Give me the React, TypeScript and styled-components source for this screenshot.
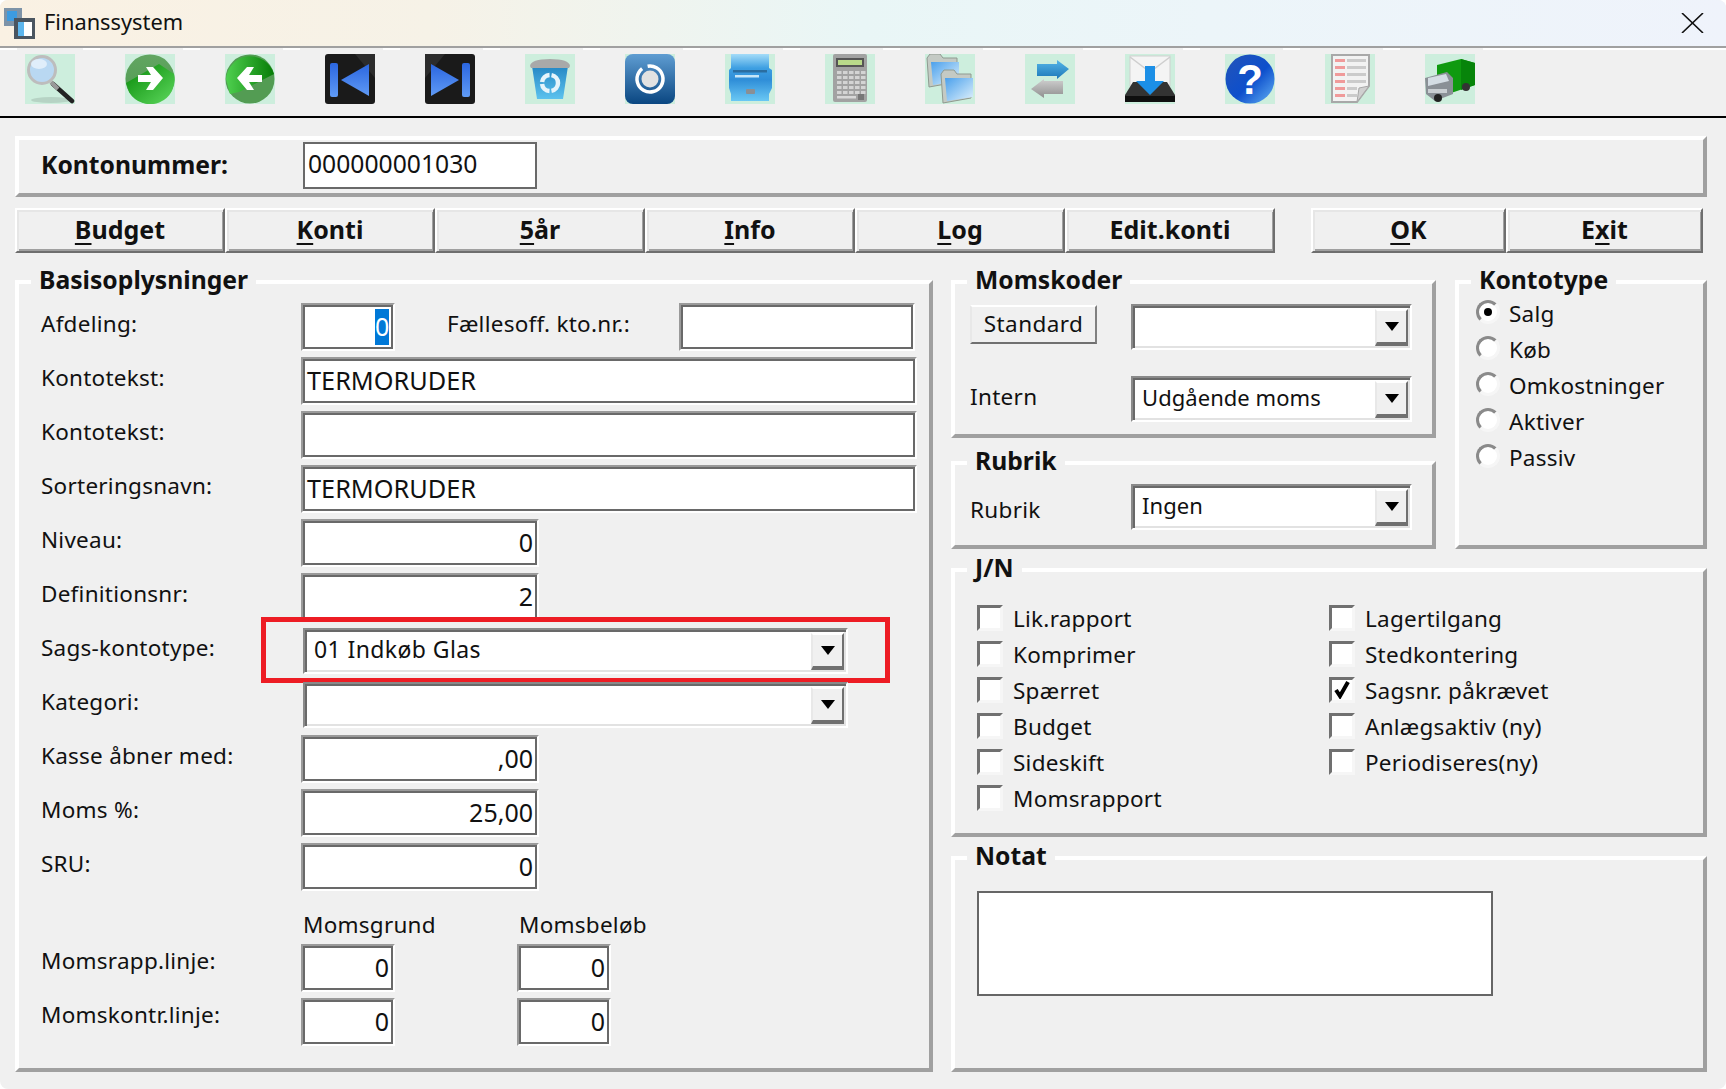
import React from 'react'
import styled, { createGlobalStyle } from 'styled-components'

const GlobalStyle = createGlobalStyle`
    html, body {
        margin: 0;
        padding: 0;
        background: #fff;
    }
    body {
        font-family: "Noto Sans", sans-serif;
        color: #111;
    }
`

const Window = styled.div`
    width: 1726px;
    height: 1089px;
    box-sizing: border-box;
    background: #f0f0f0;
    border-radius: 8px;
    overflow: hidden;
    display: flex;
    flex-direction: column;
`

const TitleBar = styled.div`
    height: 46px;
    box-sizing: content-box;
    flex-shrink: 0;
    display: flex;
    align-items: center;
    padding: 0 22px 0 3px;
    border-bottom: 2px solid #a0a0a0;
    background: linear-gradient(90deg, #faf1e3 0%, #f6f2e7 25%, #e9f6f6 50%, #ecf5f9 70%, #eff3fb 100%);
`

const TitleText = styled.span`
    font-size: 21.8px;
    margin-left: 8px;
    padding-bottom: 4px;
    flex: 1;
`

const DashLine = styled.div`
    height: 2px;
    flex-shrink: 0;
    background:
        linear-gradient(90deg, transparent 1483px, #fff 1483px),
        linear-gradient(90deg, #fff 17px, transparent 17px) no-repeat,
        repeating-linear-gradient(90deg, transparent 0 83px, #fff 83px 117px, transparent 117px 100px);
    background-size: auto, auto, 100px 2px;
`

const Toolbar = styled.div`
    height: 62px;
    flex-shrink: 0;
    display: flex;
    gap: 50px;
    padding: 4px 0 0 25px;
    border-bottom: 2px solid #000;
`

const ToolIcon = styled.svg`
    width: 50px;
    height: 50px;
    flex-shrink: 0;
`

const Content = styled.div`
    flex: 1;
    display: flex;
    flex-direction: column;
    padding: 18px 19px 17px 15px;
`

const GroupBox = styled.div<{ $h?: number }>`
    position: relative;
    box-sizing: border-box;
    border-style: solid;
    border-width: 4px;
    border-color: #fff #a0a0a0 #a0a0a0 #fff;
    ${p => p.$h ? `height: ${p.$h}px; flex-shrink: 0;` : 'flex: 1;'}
`

const Legend = styled.div`
    position: absolute;
    top: -21px;
    left: 12px;
    padding: 0 8px;
    background: #f0f0f0;
    font-size: 24.7px;
    font-weight: 700;
    line-height: 34px;
`

const AccountBar = styled(GroupBox)`
    display: flex;
    align-items: center;
    padding-left: 23px;
    padding-bottom: 3px;
`

const AccountLabel = styled.div`
    width: 262px;
    margin-left: -1px;
    padding-bottom: 2px;
    font-size: 24.7px;
    font-weight: 700;
`

const Field = styled.div<{ $w: number; $h?: number; $right?: boolean; $flat?: boolean }>`
    width: ${p => p.$w}px;
    height: ${p => p.$h ?? 48}px;
    box-sizing: border-box;
    flex-shrink: 0;
    display: flex;
    align-items: center;
    justify-content: ${p => p.$right ? 'flex-end' : 'flex-start'};
    padding: ${p => p.$right ? '0 4px 3px 0' : `0 0 3px ${p.$flat ? 3 : 4}px`};
    background: #fff;
    font-size: ${p => p.$right ? 25 : p.$flat ? 24.7 : 25.3}px;
    white-space: nowrap;
    overflow: hidden;
    border-style: solid;
    border-width: 2px;
    border-color: ${p => p.$flat ? '#696969' : '#9a9a9a #fff #fff #9a9a9a'};
    ${p => p.$flat ? '' : 'box-shadow: inset 0 0 0 2px #696969;'}
`

const Selection = styled.span`
    display: block;
    width: 14px;
    height: 36px;
    margin: 3px 0 0 0;
    background: #0078d7;
    color: #fff;
    line-height: 34px;
    text-align: center;
`

const ButtonRow = styled.div`
    display: flex;
    justify-content: space-between;
    margin: 11px 4px 0 0;
    flex-shrink: 0;
`

const ButtonGroup = styled.div`
    display: flex;
`

const CmdButton = styled.div<{ $w: number }>`
    width: ${p => p.$w}px;
    height: 45px;
    box-sizing: border-box;
    display: flex;
    align-items: center;
    justify-content: center;
    padding-bottom: 3px;
    font-size: 25px;
    font-weight: 700;
    background: #f0f0f0;
    border-style: solid;
    border-width: 2px;
    border-color: #fff #6e6e6e #6e6e6e #fff;
    box-shadow: inset 2px 2px 0 #e6e6e6, inset -1px -2px 0 #a0a0a0;

    u {
        text-underline-offset: 4px;
        text-decoration-thickness: 2px;
    }
`

const Main = styled.div`
    flex: 1;
    display: flex;
    gap: 18px;
    margin-top: 27px;
    min-height: 0;
`

const LeftPanel = styled(GroupBox)`
    flex: none;
    width: 918px;
    padding: 16px 0 0 22px;
`

const FormRow = styled.div`
    position: relative;
    height: 54px;
    display: flex;
    align-items: center;
`

const FormLabel = styled.div<{ $w?: number; $gap?: number; $lift?: number }>`
    width: ${p => p.$w ?? 260}px;
    margin-left: ${p => p.$gap ?? 0}px;
    padding-bottom: ${p => p.$lift ?? 8}px;
    font-size: 22.5px;
    letter-spacing: 0.25px;
    white-space: nowrap;
    flex-shrink: 0;
`

const ColumnHeads = styled.div`
    height: 47px;
    display: flex;
    align-items: flex-end;
    padding-left: 260px;
    font-size: 22.5px;
    letter-spacing: 0.25px;
`

const ColumnHead = styled.div`
    width: 216px;
    padding: 0 0 0 2px;
    box-sizing: border-box;
    line-height: 32px;
`

const Spacer = styled.div`
    width: 122px;
    flex-shrink: 0;
`

const Highlight = styled.div`
    position: absolute;
    left: 220px;
    top: -7px;
    width: 629px;
    height: 66px;
    box-sizing: border-box;
    border: 5px solid #ed1c24;
`

const SelectBox = styled.div<{ $w: number; $shift: number }>`
    width: ${p => p.$w}px;
    height: 46px;
    margin-left: ${p => p.$shift}px;
    box-sizing: border-box;
    flex-shrink: 0;
    display: flex;
    align-items: stretch;
    background: #fff;
    border-style: solid;
    border-width: 2px;
    border-color: #8a8a8a #fff #fff #8a8a8a;
    box-shadow: inset 2px 2px 0 #696969, inset -2px -2px 0 #e2e2e2;
`

const SelectValue = styled.div<{ $tight?: boolean }>`
    flex: 1;
    display: flex;
    align-items: center;
    padding: 0 0 5px 9px;
    font-size: ${p => p.$tight ? 22 : 23}px;
    letter-spacing: ${p => p.$tight ? 0.05 : 0.4}px;
    white-space: nowrap;
`

const SelectArrow = styled.div`
    width: 33px;
    margin: 3px 2px 2px 0;
    box-sizing: border-box;
    display: flex;
    align-items: center;
    justify-content: center;
    background: #f0f0f0;
    border-style: solid;
    border-width: 2px 2px 4px 2px;
    border-color: #fff #707070 #707070 #e8e8e8;

    &::after {
        content: '';
        width: 0;
        height: 0;
        border-style: solid;
        border-width: 9px 7px 0 7px;
        border-color: #000 transparent transparent transparent;
    }
`

const RightPanel = styled.div`
    flex: 1;
    min-width: 0;
    display: flex;
    flex-direction: column;
    gap: 19px;
`

const TopRight = styled.div`
    display: flex;
    gap: 19px;
    height: 269px;
    flex-shrink: 0;
`

const CodesColumn = styled.div`
    width: 485px;
    display: flex;
    flex-direction: column;
    gap: 23px;
`

const CodeRow = styled.div<{ $top: number }>`
    display: flex;
    align-items: center;
    padding: ${p => p.$top}px 0 0 15px;
`

const CodeLabel = styled.div<{ $nudge: number }>`
    width: 161px;
    font-size: 22.5px;
    letter-spacing: 0.3px;
    flex-shrink: 0;
    padding: ${p => p.$nudge > 0 ? `${p.$nudge}px 0 0` : `0 0 ${-p.$nudge}px`};
`

const PlainButton = styled.div`
    width: 127px;
    height: 39px;
    margin-right: 34px;
    margin-bottom: 6px;
    padding-bottom: 2px;
    box-sizing: border-box;
    flex-shrink: 0;
    display: flex;
    align-items: center;
    justify-content: center;
    font-size: 22.5px;
    letter-spacing: 0.4px;
    background: #f0f0f0;
    border-style: solid;
    border-width: 2px;
    border-color: #fff #808080 #707070 #e8e8e8;
`

const RadioList = styled.div`
    flex: 1;
    position: relative;
    padding: 11px 0 0 17px;
`

const OptionRow = styled.div<{ $gap: number }>`
    height: 36px;
    display: flex;
    align-items: center;
    gap: ${p => p.$gap}px;
    font-size: 22.5px;
    letter-spacing: 0.25px;
    white-space: nowrap;
`

const RadioMark = styled.div<{ $on?: boolean }>`
    width: 24px;
    height: 24px;
    box-sizing: border-box;
    margin-bottom: 2px;
    flex-shrink: 0;
    border-radius: 50%;
    background: #fff;
    border-style: solid;
    border-width: 3px;
    border-color: #8a8a8a #f6f6f6 #f6f6f6 #8a8a8a;
    display: flex;
    align-items: center;
    justify-content: center;

    &::after {
        content: '';
        width: 8px;
        height: 8px;
        border-radius: 50%;
        background: ${p => p.$on ? '#000' : 'transparent'};
    }
`

const CheckMark = styled.div`
    width: 26px;
    height: 26px;
    box-sizing: border-box;
    margin-bottom: 2px;
    flex-shrink: 0;
    background: #fff;
    border-style: solid;
    border-width: 3px;
    border-color: #707070 #f6f6f6 #f6f6f6 #707070;
    display: flex;
    align-items: center;
    justify-content: center;
`

const CheckText = styled.span`
    padding-bottom: 2px;
`

const CheckGrid = styled.div`
    display: grid;
    grid-template-columns: 352px 1fr;
    grid-template-rows: repeat(6, 36px);
    grid-auto-flow: column;
    padding: 29px 0 0 22px;
`

const NoteArea = styled.div`
    width: 516px;
    height: 105px;
    margin: 31px 0 0 22px;
    box-sizing: border-box;
    background: #fff;
    border: 2px solid #666;
`

const ToolTile = ({ children }: { children: React.ReactNode }) => (
    <ToolIcon viewBox="0 0 50 50">
        <rect width="50" height="50" fill="#cdeedd" />
        {children}
    </ToolIcon>
)

const AppLogo = () => (
    <svg width="33" height="33" viewBox="0 0 33 33">
        <rect x="1" y="1" width="18" height="18" fill="#7d93a8" />
        <rect x="4" y="4" width="10" height="10" fill="#3d9be0" />
        <rect x="11" y="11" width="21" height="21" fill="#4a5560" />
        <rect x="15" y="15" width="14" height="14" fill="#fff" />
        <rect x="15" y="15" width="6" height="14" fill="#5cb6ee" />
    </svg>
)

const SearchIcon = () => (
    <ToolTile>
        <ellipse cx="26" cy="46" rx="20" ry="3" fill="#b6d3c4" />
        <line x1="28" y1="30" x2="47" y2="47" stroke="#222" strokeWidth="4.5" strokeLinecap="round" />
        <line x1="26" y1="28" x2="33" y2="35" stroke="#999" strokeWidth="4" />
        <circle cx="17" cy="16" r="13.5" fill="#b9d8f2" stroke="#bdbdbd" strokeWidth="3" />
        <ellipse cx="14" cy="10" rx="8" ry="5" fill="#e0eefa" />
    </ToolTile>
)

const RightArrowIcon = () => (
    <ToolTile>
        <defs>
            <linearGradient id="ga" x1="0" y1="0" x2="0" y2="1">
                <stop offset="0" stopColor="#62a562" />
                <stop offset="1" stopColor="#4f9a4f" />
            </linearGradient>
            <linearGradient id="gb" x1="0" y1="0" x2="1" y2="1">
                <stop offset="0" stopColor="#058805" />
                <stop offset="1" stopColor="#5fd95f" />
            </linearGradient>
        </defs>
        <circle cx="25" cy="25" r="24.5" fill="url(#ga)" />
        <path d="M1 29 L 34 10 L 49 20 A 24.5 24.5 0 0 1 4 38 Z" fill="url(#gb)" />
        <path d="M13 21 H26 L21 13 H28 L38 24 L28 36 H21 L26 28 H13 Z" fill="#fff" />
    </ToolTile>
)

const LeftArrowIcon = () => (
    <ToolTile>
        <defs>
            <linearGradient id="gc" x1="0" y1="0" x2="1" y2="0">
                <stop offset="0" stopColor="#4fd04f" />
                <stop offset="1" stopColor="#067c06" />
            </linearGradient>
        </defs>
        <circle cx="25" cy="25" r="24.5" fill="#539c53" />
        <path d="M1 25 A 24.5 24.5 0 0 1 49 20 L 14 38 L 5 40 Z" fill="url(#gc)" />
        <path d="M37 21 H24 L29 13 H22 L12 24 L22 36 H29 L24 28 H37 Z" fill="#fff" />
    </ToolTile>
)

const NavIcon = ({ flip, id }: { flip?: boolean; id: string }) => (
    <ToolIcon viewBox="0 0 50 50">
        <defs>
            <linearGradient id={id} x1="0" y1="0" x2="0" y2="1">
                <stop offset="0" stopColor="#2b66e0" />
                <stop offset="1" stopColor="#5f9af5" />
            </linearGradient>
        </defs>
        <g transform={flip ? 'translate(50 0) scale(-1 1)' : undefined}>
            <rect width="50" height="50" rx="3" fill="#1a1a1a" />
            <path d="M30 0 H50 V24 Z" fill="#2c2c2c" />
            <rect x="5" y="9" width="8" height="34" rx="2" fill={`url(#${id})`} />
            <path d="M44 10 V42 L16 26 Z" fill={`url(#${id})`} />
        </g>
    </ToolIcon>
)

const BinIcon = () => (
    <ToolTile>
        <defs>
            <linearGradient id="gd" x1="0" y1="0" x2="0" y2="1">
                <stop offset="0" stopColor="#2487c4" />
                <stop offset="1" stopColor="#5cc2ee" />
            </linearGradient>
        </defs>
        <path d="M7 12 H43 L38 45 H12 Z" fill="url(#gd)" />
        <path d="M5 12 Q6 5 25 5 Q44 5 45 12 L44 14 H6 Z" fill="#a9a9a9" />
        <circle cx="25" cy="29" r="8" fill="none" stroke="#e6f4fb" strokeWidth="4.5" strokeDasharray="11 2" />
    </ToolTile>
)

const DiscIcon = () => (
    <ToolIcon viewBox="0 0 50 50">
        <defs>
            <linearGradient id="ge" x1="0" y1="0" x2="0" y2="1">
                <stop offset="0" stopColor="#5f9dd2" />
                <stop offset="1" stopColor="#0a4681" />
            </linearGradient>
        </defs>
        <rect width="50" height="50" fill="#cdeedd" />
        <rect width="50" height="50" rx="8" fill="url(#ge)" />
        <circle cx="25" cy="25" r="13" fill="none" stroke="#fff" strokeWidth="3.5" strokeDasharray="66 6" transform="rotate(-60 25 25)" />
        <circle cx="25" cy="25" r="8.5" fill="#e2e2e2" />
    </ToolIcon>
)

const DrawerIcon = () => (
    <ToolTile>
        <defs>
            <linearGradient id="gf" x1="0" y1="0" x2="0" y2="1">
                <stop offset="0" stopColor="#a4dcf8" />
                <stop offset="0.3" stopColor="#3d9fe2" />
                <stop offset="0.55" stopColor="#2f8ed8" />
                <stop offset="1" stopColor="#6ac8f4" />
            </linearGradient>
        </defs>
        <path d="M6 0 H44 V14 L47 16 V34 L44 40 V47 H6 V40 L4 34 V16 L6 14 Z" fill="url(#gf)" />
        <rect x="8" y="16" width="34" height="2.5" fill="#2a6da0" />
        <rect x="10" y="21" width="24" height="2.5" fill="#c6e6f8" />
        <rect x="21" y="35" width="9" height="5" rx="1" fill="#8a8f94" />
    </ToolTile>
)

const keyRows = [17, 22, 27, 32, 37]
const keyCols = [12, 18, 24, 30, 36]

const CalculatorIcon = () => (
    <ToolTile>
        <rect x="8" y="0" width="34" height="48" rx="2" fill="#a2a2a2" />
        <rect x="11" y="4" width="28" height="9" fill="#555" />
        <rect x="13" y="6" width="24" height="5" fill="#b9d98a" />
        {keyRows.map(y => keyCols.map(x => (
            <rect key={`${x}-${y}`} x={x} y={y} width="4.5" height="3" fill="#d4d4d4" />
        )))}
        <rect x="12" y="42" width="19" height="2.5" fill="#d8d8d8" />
        <rect x="33" y="40" width="6" height="6" fill="#777" />
    </ToolTile>
)

const FolderIcon = ({ x, y, id }: { x: number; y: number; id: string }) => (
    <g transform={`translate(${x} ${y})`}>
        <defs>
            <linearGradient id={id} x1="0" y1="0" x2="1" y2="1">
                <stop offset="0" stopColor="#4aa0ec" />
                <stop offset="1" stopColor="#dff1fc" />
            </linearGradient>
        </defs>
        <path d="M1 4 L4 0 H14 L17 4 H31 V28 L3 33 Z" fill="#c4cac4" stroke="#8f9a90" strokeWidth="1" />
        <path d="M5 8 H33 V27 L7 31 Z" fill={`url(#${id})`} />
    </g>
)

const FoldersIcon = () => (
    <ToolTile>
        <FolderIcon x={1} y={0} id="gg" />
        <FolderIcon x={15} y={16} id="gh" />
    </ToolTile>
)

const SwapIcon = () => (
    <ToolTile>
        <defs>
            <linearGradient id="gi" x1="0" y1="0" x2="0" y2="1">
                <stop offset="0" stopColor="#55b5e8" />
                <stop offset="1" stopColor="#1d78b8" />
            </linearGradient>
            <linearGradient id="gj" x1="0" y1="0" x2="0" y2="1">
                <stop offset="0" stopColor="#cfcfcf" />
                <stop offset="1" stopColor="#8f8f8f" />
            </linearGradient>
        </defs>
        <path d="M12 10 H32 V6 L44 15 L32 25 V22 H12 Z" fill="url(#gi)" />
        <path d="M38 27 H19 V25 L6 35 L19 44 V40 H38 Z" fill="url(#gj)" />
    </ToolTile>
)

const InboxIcon = () => (
    <ToolTile>
        <rect x="5" y="2" width="40" height="30" fill="#f4f4f4" stroke="#cfcfcf" />
        <path d="M5 3 L25 18 L45 3" fill="none" stroke="#cfcfcf" strokeWidth="1.5" />
        <path d="M8 28 H42 L50 41 V48 H0 V41 Z" fill="#333" />
        <rect x="0" y="42" width="50" height="6" fill="#0f0f0f" />
        <path d="M20 12 H30 V27 H39 L25 41 L11 27 H20 Z" fill="#1c8fe6" />
    </ToolTile>
)

const HelpIcon = () => (
    <ToolTile>
        <defs>
            <linearGradient id="gk" x1="0" y1="0" x2="1" y2="1">
                <stop offset="0" stopColor="#2454b8" />
                <stop offset="0.55" stopColor="#0d4fcc" />
                <stop offset="1" stopColor="#64b2f5" />
            </linearGradient>
        </defs>
        <circle cx="25" cy="25" r="24.5" fill="url(#gk)" />
        <text x="25" y="40" textAnchor="middle" fontFamily='"Liberation Sans", sans-serif' fontWeight="700" fontSize="42" fill="#fff">?</text>
    </ToolTile>
)

const listRows = [5, 12, 19, 26, 33, 40]

const ReportIcon = () => (
    <ToolTile>
        <path d="M7 1 H44 V32 L32 48 H7 Z" fill="#f2f2f2" stroke="#a8a8a8" strokeWidth="2" />
        {listRows.map(y => (
            <g key={y}>
                <rect x="10" y={y} width="10" height="3" fill="#f09a9a" />
                <rect x="22" y={y} width={y > 30 ? 10 : 19} height="3" fill="#cbcbcb" />
            </g>
        ))}
        <path d="M32 48 L34 34 L44 32 Z" fill="#d0d0d0" stroke="#a8a8a8" />
    </ToolTile>
)

const TruckIcon = () => (
    <ToolTile>
        <path d="M12 11 L36 5 L50 9 V31 L26 39 L12 30 Z" fill="#0f9a0f" />
        <path d="M36 5 L50 9 V31 L36 36 Z" fill="#07840a" />
        <path d="M0 24 L22 18 L28 24 V40 L10 47 L1 40 Z" fill="#8a9096" />
        <path d="M3 24 L21 20 L24 27 L3 32 Z" fill="#d4dde4" />
        <rect x="3" y="35" width="19" height="4" fill="#c9ced2" />
        <circle cx="13" cy="44" r="4" fill="#222" />
        <circle cx="41" cy="33" r="4" fill="#333" />
    </ToolTile>
)

const CheckTick = () => (
    <svg width="16" height="18" viewBox="0 0 16 18">
        <path d="M2 9 L6 15 L14 1" fill="none" stroke="#000" strokeWidth="4" />
    </svg>
)

const Select = ({ w, shift, value, tight }: { w: number; shift: number; value?: string; tight?: boolean }) => (
    <SelectBox $w={w} $shift={shift}>
        <SelectValue $tight={tight}>{value}</SelectValue>
        <SelectArrow />
    </SelectBox>
)

const radios = ['Salg', 'Køb', 'Omkostninger', 'Aktiver', 'Passiv']
const checks = [
    { label: 'Lik.rapport' },
    { label: 'Komprimer' },
    { label: 'Spærret' },
    { label: 'Budget' },
    { label: 'Sideskift' },
    { label: 'Momsrapport' },
    { label: 'Lagertilgang' },
    { label: 'Stedkontering' },
    { label: 'Sagsnr. påkrævet', on: true },
    { label: 'Anlægsaktiv (ny)' },
    { label: 'Periodiseres(ny)' },
]

const App = () => (
    <Window>
        <GlobalStyle />
        <TitleBar>
            <AppLogo />
            <TitleText>Finanssystem</TitleText>
            <svg width="23" height="20" viewBox="0 0 23 20">
                <path d="M1 0 L22 20 M22 0 L1 20" stroke="#111" strokeWidth="1.6" />
            </svg>
        </TitleBar>
        <DashLine />
        <Toolbar>
            <SearchIcon />
            <RightArrowIcon />
            <LeftArrowIcon />
            <NavIcon id="gn1" />
            <NavIcon id="gn2" flip />
            <BinIcon />
            <DiscIcon />
            <DrawerIcon />
            <CalculatorIcon />
            <FoldersIcon />
            <SwapIcon />
            <InboxIcon />
            <HelpIcon />
            <ReportIcon />
            <TruckIcon />
        </Toolbar>
        <Content>
            <AccountBar $h={61}>
                <AccountLabel>Kontonummer:</AccountLabel>
                <Field $w={234} $h={47} $flat>000000001030</Field>
            </AccountBar>
            <ButtonRow>
                <ButtonGroup>
                    <CmdButton $w={210}><span><u>B</u>udget</span></CmdButton>
                    <CmdButton $w={210}><span><u>K</u>onti</span></CmdButton>
                    <CmdButton $w={210}><span><u>5</u>år</span></CmdButton>
                    <CmdButton $w={210}><span><u>I</u>nfo</span></CmdButton>
                    <CmdButton $w={210}><span><u>L</u>og</span></CmdButton>
                    <CmdButton $w={210}>Edit.konti</CmdButton>
                </ButtonGroup>
                <ButtonGroup>
                    <CmdButton $w={195}><span><u>O</u>K</span></CmdButton>
                    <CmdButton $w={197}><span>E<u>x</u>it</span></CmdButton>
                </ButtonGroup>
            </ButtonRow>
            <Main>
                <LeftPanel>
                    <Legend>Basisoplysninger</Legend>
                    <FormRow>
                        <FormLabel>Afdeling:</FormLabel>
                        <Field $w={94} $right><Selection>0</Selection></Field>
                        <FormLabel $w={232} $gap={52}>Fællesoff. kto.nr.:</FormLabel>
                        <Field $w={236} />
                    </FormRow>
                    <FormRow>
                        <FormLabel>Kontotekst:</FormLabel>
                        <Field $w={616}>TERMORUDER</Field>
                    </FormRow>
                    <FormRow>
                        <FormLabel>Kontotekst:</FormLabel>
                        <Field $w={616} />
                    </FormRow>
                    <FormRow>
                        <FormLabel>Sorteringsnavn:</FormLabel>
                        <Field $w={616}>TERMORUDER</Field>
                    </FormRow>
                    <FormRow>
                        <FormLabel>Niveau:</FormLabel>
                        <Field $w={238} $right>0</Field>
                    </FormRow>
                    <FormRow>
                        <FormLabel>Definitionsnr:</FormLabel>
                        <Field $w={238} $right>2</Field>
                    </FormRow>
                    <FormRow>
                        <FormLabel>Sags-kontotype:</FormLabel>
                        <Select w={545} shift={2} value="01 Indkøb Glas" />
                        <Highlight />
                    </FormRow>
                    <FormRow>
                        <FormLabel>Kategori:</FormLabel>
                        <Select w={545} shift={2} />
                    </FormRow>
                    <FormRow>
                        <FormLabel>Kasse åbner med:</FormLabel>
                        <Field $w={238} $right>,00</Field>
                    </FormRow>
                    <FormRow>
                        <FormLabel>Moms %:</FormLabel>
                        <Field $w={238} $right>25,00</Field>
                    </FormRow>
                    <FormRow>
                        <FormLabel>SRU:</FormLabel>
                        <Field $w={238} $right>0</Field>
                    </FormRow>
                    <ColumnHeads>
                        <ColumnHead>Momsgrund</ColumnHead>
                        <ColumnHead>Momsbeløb</ColumnHead>
                    </ColumnHeads>
                    <FormRow>
                        <FormLabel $lift={16}>Momsrapp.linje:</FormLabel>
                        <Field $w={94} $right>0</Field>
                        <Spacer />
                        <Field $w={94} $right>0</Field>
                    </FormRow>
                    <FormRow>
                        <FormLabel $lift={16}>Momskontr.linje:</FormLabel>
                        <Field $w={94} $right>0</Field>
                        <Spacer />
                        <Field $w={94} $right>0</Field>
                    </FormRow>
                </LeftPanel>
                <RightPanel>
                    <TopRight>
                        <CodesColumn>
                            <GroupBox $h={158}>
                                <Legend>Momskoder</Legend>
                                <CodeRow $top={20}>
                                    <PlainButton>Standard</PlainButton>
                                    <Select w={281} shift={0} />
                                </CodeRow>
                                <CodeRow $top={26}>
                                    <CodeLabel $nudge={-6}>Intern</CodeLabel>
                                    <Select w={281} shift={0} value="Udgående moms" tight />
                                </CodeRow>
                            </GroupBox>
                            <GroupBox $h={88}>
                                <Legend>Rubrik</Legend>
                                <CodeRow $top={19}>
                                    <CodeLabel $nudge={4}>Rubrik</CodeLabel>
                                    <Select w={281} shift={0} value="Ingen" tight />
                                </CodeRow>
                            </GroupBox>
                        </CodesColumn>
                        <GroupBox>
                            <Legend>Kontotype</Legend>
                            <RadioList>
                                {radios.map((label, i) => (
                                    <OptionRow key={label} $gap={9}>
                                        <RadioMark $on={i === 0} />
                                        {label}
                                    </OptionRow>
                                ))}
                            </RadioList>
                        </GroupBox>
                    </TopRight>
                    <GroupBox $h={269}>
                        <Legend>J/N</Legend>
                        <CheckGrid>
                            {checks.map(c => (
                                <OptionRow key={c.label} $gap={10}>
                                    <CheckMark>{c.on && <CheckTick />}</CheckMark>
                                    <CheckText>{c.label}</CheckText>
                                </OptionRow>
                            ))}
                        </CheckGrid>
                    </GroupBox>
                    <GroupBox>
                        <Legend>Notat</Legend>
                        <NoteArea />
                    </GroupBox>
                </RightPanel>
            </Main>
        </Content>
    </Window>
)

export default App
